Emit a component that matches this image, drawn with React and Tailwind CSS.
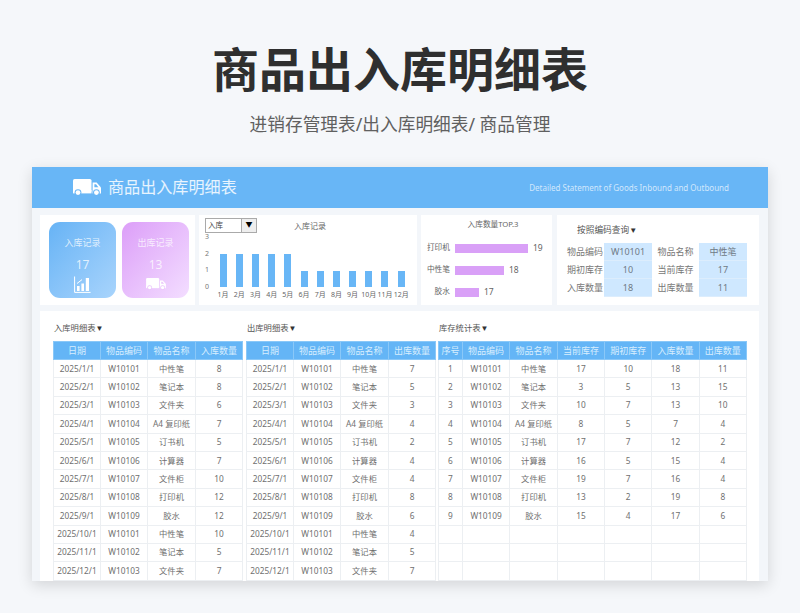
const names = ["中性笔", "笔记本", "文件夹", "A4 复印纸", "订书机", "计算器", "文件柜", "打印机", "胶水"];
const code = (i) => "W1010" + ((i % 9) + 1);
const inQty = [8, 8, 6, 7, 5, 7, 10, 12, 12, 10, 5, 7];
const outQty = [7, 5, 3, 4, 2, 4, 4, 8, 6, 4, 5, 7];
const monthRows = (qty) =>
  qty.map((q, i) => [`2025/${i + 1}/1`, code(i), names[i % 9], q]);

const stock = [
  [17, 10, 18, 11],
  [3, 5, 13, 15],
  [10, 7, 13, 10],
  [8, 5, 7, 4],
  [17, 7, 12, 2],
  [16, 5, 15, 4],
  [19, 7, 16, 4],
  [13, 2, 19, 8],
  [15, 4, 17, 6],
];
const stockRows = [
  ...stock.map((s, i) => [i + 1, code(i), names[i], ...s]),
  ...Array.from({ length: 4 }, () => ["", "", "", "", "", "", ""]),
];

const months = [2, 2, 2, 2, 2, 1, 1, 1, 1, 1, 1, 1];

function DataTable({ widths, headers, rows }) {
  return (
    <table className="table-fixed border-collapse leading-none">
      <colgroup>
        {widths.map((w, i) => (
          <col key={i} style={{ width: w }} />
        ))}
      </colgroup>
      <thead>
        <tr className="h-[18px] bg-[#64b5f6] text-[9px] text-[#d8eefe]">
          {headers.map((h) => (
            <th key={h} className="border border-[#8ac8f8] p-0 font-normal">
              {h}
            </th>
          ))}
        </tr>
      </thead>
      <tbody>
        {rows.map((r, i) => (
          <tr key={i} className="h-[18.4px] text-[8.3px] text-[#707070]">
            {r.map((c, j) => (
              <td key={j} className="border border-[#eceff2] p-0 text-center whitespace-nowrap">
                {c}
              </td>
            ))}
          </tr>
        ))}
      </tbody>
    </table>
  );
}

function TruckIcon({ className, gap }) {
  return (
    <svg className={className} viewBox="0 0 28 17">
      <rect x="0" y="0" width="18.5" height="13.5" rx="1.6" fill="#fff" />
      <rect x="0" y="11" width="18.5" height="3.4" fill="#fff" />
      <path d="M19.6 3.6H23.6L28 8.4V14.4H19.6Z" fill="#fff" />
      <path d="M21.4 5.2H23L25.4 8.2H21.4Z" fill={gap} />
      <circle cx="5" cy="13.6" r="3.4" fill={gap} />
      <circle cx="5" cy="13.6" r="2.4" fill="#fff" />
      <circle cx="23.4" cy="13.6" r="3.4" fill={gap} />
      <circle cx="23.4" cy="13.6" r="2.4" fill="#fff" />
    </svg>
  );
}

function ChartIcon() {
  return (
    <svg width="17" height="17" viewBox="0 0 17 17" fill="none">
      <path d="M0.6 0.5V16.4H16.6" stroke="#fff" strokeWidth="1" />
      <rect x="3" y="10" width="2.6" height="5" fill="#fff" />
      <rect x="7.4" y="7.5" width="2.6" height="7.5" fill="#fff" />
      <rect x="11.8" y="2" width="3.2" height="13" fill="#fff" />
      <path d="M3 7.5L8 3.6" stroke="#fff" strokeWidth="1" />
    </svg>
  );
}

function Arrow() {
  return <span className="font-['Liberation_Sans'] text-[8px] leading-none text-[#333]">▼</span>;
}

function StatCard({ title, value, className, children }) {
  return (
    <div className={`flex h-[76px] w-[67px] flex-col items-center rounded-[11px] pt-[15px] text-white/75 ${className}`}>
      <div className="text-[9px] leading-[12px]">{title}</div>
      <div className="mt-[9px] text-[12px] leading-[14px]">{value}</div>
      <div className="mt-[3px] flex h-[18px] items-center text-white">{children}</div>
    </div>
  );
}

function TopBar({ label, value, width }) {
  return (
    <div className="flex h-[12px] items-center">
      <div className="w-[29px] text-right text-[7.7px] text-[#666]">{label}</div>
      <div className="ml-[5px] h-[9px] bg-[#d9a0f7]" style={{ width }} />
      <div className="ml-[5px] text-[8.5px] text-[#666]">{value}</div>
    </div>
  );
}

function SectionTitle({ children }) {
  return (
    <div className="mt-[11px] flex h-[13px] items-center pl-[1px] text-[8.3px] text-[#555]">
      {children}
      <Arrow />
    </div>
  );
}

export default function App() {
  return (
    <div
      className="flex h-[613px] w-[800px] flex-col items-center overflow-hidden bg-[#f5f7fa]"
      style={{ fontFamily: '"Noto Sans", "Noto Sans CJK SC", sans-serif' }}
    >
      <h1 className="mt-[39px] text-[47px] leading-[60px] font-bold text-[#2f2f2f]">商品出入库明细表</h1>
      <p className="mt-[13px] text-[17.7px] leading-[24px] text-[#606060]">进销存管理表/出入库明细表/ 商品管理</p>

      <div className="mt-[31px] flex h-[414px] w-[736px] flex-col bg-[#f3f6fa] shadow-[0_4px_14px_rgba(0,0,0,0.14)]">
        <header className="flex h-[41px] items-center justify-between bg-[#68b6f6] pr-[39px] pl-[41px] text-white/85">
          <div className="flex items-center gap-[7px]">
            <TruckIcon className="h-[17px] w-[28px]" gap="#68b6f6" />
            <span className="text-[16.1px]">商品出入库明细表</span>
          </div>
          <span className="pt-[1px] text-[8px] text-white/70">Detailed Statement of Goods Inbound and Outbound</span>
        </header>

        <div className="flex flex-1 flex-col pt-[7px] pr-[9px] pl-[8px]">
          <div className="flex h-[90px]">
            <div className="flex w-[155px] items-center gap-[6px] bg-white pl-[9px]">
              <StatCard title="入库记录" value="17" className="bg-gradient-to-br from-[#66b3f5] to-[#a8d4fc]">
                <ChartIcon />
              </StatCard>
              <StatCard title="出库记录" value="13" className="bg-gradient-to-br from-[#dc9ef8] to-[#f3deff]">
                <TruckIcon className="h-[12px] w-[20px]" gap="#eac4fb" />
              </StatCard>
            </div>

            <div className="ml-[4px] flex w-[218px] flex-col bg-white pl-[6px]">
              <div className="mt-[3px] flex items-start">
                <div className="flex h-[15px] w-[52px] items-center justify-between border border-[#aaa] pl-[2px] text-[7.5px] text-[#444]">
                  入库
                  <span className="flex h-full w-[15px] items-center justify-center border-l border-[#aaa] bg-[#eee] text-[7px] text-black">▼</span>
                </div>
                <div className="ml-[37px] pt-[2px] text-[8px] text-[#666]">入库记录</div>
              </div>
              <div className="flex">
                <div className="flex h-[57px] w-[9px] flex-col justify-between text-[7px] leading-[7px] text-[#777]">
                  <span>3</span>
                  <span>2</span>
                  <span>1</span>
                  <span>0</span>
                </div>
                <div className="mt-[4px] ml-[1px]">
                  <div className="flex h-[50px] items-end">
                    {months.map((v, i) => (
                      <div key={i} className="flex w-[16.2px] justify-center">
                        <div className="w-[7px] bg-[#68b6f6]" style={{ height: v * 16.5 }} />
                      </div>
                    ))}
                  </div>
                  <div className="mt-[3px] flex">
                    {months.map((_, i) => (
                      <div key={i} className="w-[16.2px] text-center text-[7px] leading-[10px] whitespace-nowrap text-[#666]">
                        {i + 1}月
                      </div>
                    ))}
                  </div>
                </div>
              </div>
            </div>

            <div className="ml-[4px] flex w-[131px] flex-col bg-white">
              <div className="mt-[3px] pl-[13px] text-center text-[7.7px] leading-[12px] text-[#666]">入库数量TOP.3</div>
              <div className="mt-[12px] flex flex-col gap-[10px]">
                <TopBar label="打印机" value="19" width={73} />
                <TopBar label="中性笔" value="18" width={49} />
                <TopBar label="胶水" value="17" width={24} />
              </div>
            </div>

            <div className="ml-[5px] flex w-[202px] flex-col bg-white pl-[9px]">
              <div className="mt-[9px] flex h-[13px] items-center pl-[11px] text-[8.7px] text-[#555]">
                按照编码查询
                <Arrow />
              </div>
              <div className="mt-[6px] grid w-[181px] grid-cols-[38px_48px_47px_48px] text-center text-[9px] text-[#6f7a85]">
                {[
                  ["物品编码", "W10101", "物品名称", "中性笔"],
                  ["期初库存", "10", "当前库存", "17"],
                  ["入库数量", "18", "出库数量", "11"],
                ].map((row) =>
                  row.map((c, i) =>
                    i % 2 ? (
                      <div key={c + i} className="flex h-[18px] items-center justify-center border-b border-[#dcedfd] bg-[#cfe8ff]">
                        {c}
                      </div>
                    ) : (
                      <div key={c} className="flex h-[18px] items-center justify-center text-[#777]">
                        {c}
                      </div>
                    )
                  )
                )}
              </div>
            </div>
          </div>

          <div className="mt-[6px] flex h-[270px] overflow-hidden bg-white pl-[13px]">
            <section className="w-[190px]">
              <SectionTitle>入库明细表</SectionTitle>
              <div className="mt-[6px]">
                <DataTable
                  widths={[47, 47, 48, 47]}
                  headers={["日期", "物品编码", "物品名称", "入库数量"]}
                  rows={monthRows(inQty)}
                />
              </div>
            </section>
            <section className="ml-[3px] w-[190px]">
              <SectionTitle>出库明细表</SectionTitle>
              <div className="mt-[6px]">
                <DataTable
                  widths={[47, 47, 48, 47]}
                  headers={["日期", "物品编码", "物品名称", "出库数量"]}
                  rows={monthRows(outQty)}
                />
              </div>
            </section>
            <section className="ml-[2px] w-[309px]">
              <SectionTitle>库存统计表</SectionTitle>
              <div className="mt-[6px]">
                <DataTable
                  widths={[24, 47.5, 47.5, 47.5, 47.5, 47.5, 47.5]}
                  headers={["序号", "物品编码", "物品名称", "当前库存", "期初库存", "入库数量", "出库数量"]}
                  rows={stockRows}
                />
              </div>
            </section>
          </div>
        </div>
      </div>
    </div>
  );
}
